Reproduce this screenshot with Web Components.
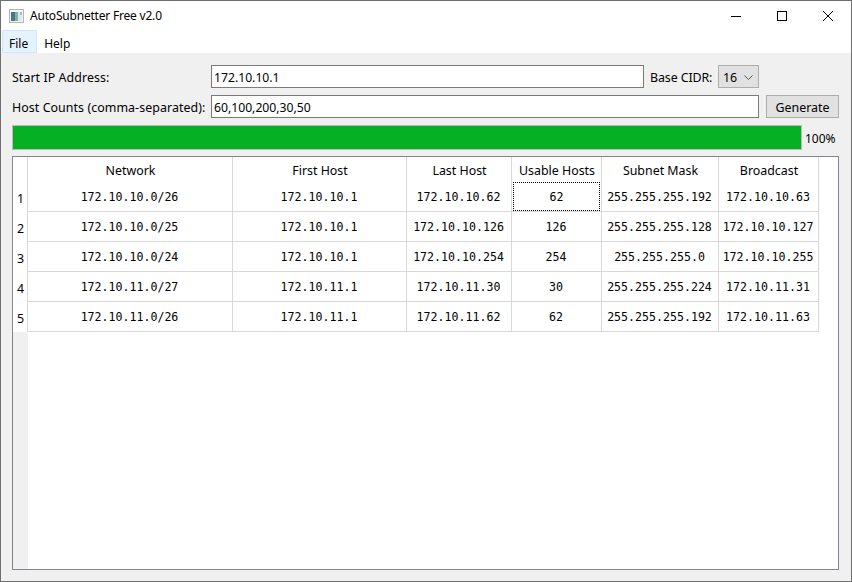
<!DOCTYPE html>
<html>
<head>
<meta charset="utf-8">
<title>AutoSubnetter Free v2.0</title>
<style>
  html, body { margin: 0; padding: 0; background: #f0f0f0; }
  body { font-family: "Noto Sans", "Open Sans", sans-serif; font-size: 12.4px; color: #000; }
</style>
</head>
<body>
<app-window>
  <title-bar slot="top" text="AutoSubnetter Free v2.0"></title-bar>
  <menu-bar slot="top"></menu-bar>
  <form-row short>
    <field-label wide>Start IP Address:</field-label>
    <text-field grow value="172.10.10.1"></text-field>
    <field-label narrow>Base CIDR:</field-label>
    <combo-box value="16"></combo-box>
  </form-row>
  <form-row>
    <field-label wide>Host Counts (comma-separated):</field-label>
    <text-field grow value="60,100,200,30,50"></text-field>
    <push-button>Generate</push-button>
  </form-row>
  <progress-bar value="100"></progress-bar>
  <data-table></data-table>
</app-window>

<script>
// app-window.js
class AppWindow extends HTMLElement {
  constructor() {
    super();
    this.root = this.attachShadow({mode: 'open'});
    this.root.innerHTML = `
    <style>
    :host {
      background: #f0f0f0;
      border: 1px solid #707070;
      box-sizing: border-box;
      display: flex;
      flex-direction: column;
      height: 582px;
      width: 852px;
    }
    .top { background: white; }
    .body {
      display: flex;
      flex: 1;
      flex-direction: column;
      min-height: 0;
      padding: 12px 12px 11px 11px;
    }
    </style>
    <div class="top"><slot name="top"></slot></div>
    <div class="body"><slot></slot></div>`;
  }
}

class TitleBar extends HTMLElement {
  constructor() {
    super();
    this.root = this.attachShadow({mode: 'open'});
    this.root.innerHTML = `
    <style>
    :host {
      align-items: center;
      display: flex;
      height: 29px;
    }
    .icon { margin: 0 6px 0 8px; }
    .text { flex: 1; font-size: 12px; letter-spacing: -0.2px; }
    .btn { display: block; height: 29px; width: 46px; }
    </style>
    <svg class="icon" width="15" height="14" viewBox="0 0 15 14">
      <rect x="0.5" y="0.5" width="14" height="13" fill="#f4f4f4" stroke="#b4b4b4"/>
      <rect x="2" y="3" width="4" height="9" fill="#4f7386"/>
      <rect x="6" y="3" width="3" height="9" fill="#7fb39a"/>
      <rect x="9" y="3" width="4" height="9" fill="#dfe8e8"/>
      <rect x="11" y="3" width="2" height="3" fill="#a9bcc4"/>
    </svg>
    <span class="text"></span>
    <svg class="btn" viewBox="0 0 46 29"><path d="M18 15.5h10" stroke="#000" fill="none"/></svg>
    <svg class="btn" viewBox="0 0 46 29"><rect x="18.5" y="10.5" width="9" height="9" stroke="#000" fill="none"/></svg>
    <svg class="btn" viewBox="0 0 46 29"><path d="M18 10l10 10M28 10l-10 10" stroke="#000" fill="none"/></svg>`;
    this.root.querySelector('.text').textContent = this.getAttribute('text');
  }
}

class MenuBar extends HTMLElement {
  constructor() {
    super();
    this.root = this.attachShadow({mode: 'open'});
    this.root.innerHTML = `
    <style>
    :host {
      display: flex;
      font-size: 12px;
      height: 23px;
      padding-left: 1px;
    }
    .item {
      align-items: center;
      border: 1px solid transparent;
      box-sizing: border-box;
      display: flex;
      padding: 3px 8px 0 6px;
    }
    .item.active {
      background: #e5f3ff;
      border-color: #cce8ff;
    }
    </style>
    <div class="item active">File</div>
    <div class="item">Help</div>`;
  }
}

class FormRow extends HTMLElement {
  constructor() {
    super();
    this.root = this.attachShadow({mode: 'open'});
    this.root.innerHTML = `
    <style>
    :host {
      display: flex;
      gap: 6px;
      height: 23px;
      margin-bottom: 7px;
    }
    :host([short]) { margin-right: 80px; }
    </style>
    <slot></slot>`;
  }
}

class FieldLabel extends HTMLElement {
  constructor() {
    super();
    this.root = this.attachShadow({mode: 'open'});
    this.root.innerHTML = `
    <style>
    :host {
      align-items: center;
      display: flex;
      padding-top: 1px;
      white-space: nowrap;
    }
    :host([wide]) { letter-spacing: 0.07px; width: 193px; }
    :host([narrow]) { letter-spacing: -0.1px; width: 62px; }
    </style>
    <slot></slot>`;
  }
}

class TextField extends HTMLElement {
  constructor() {
    super();
    this.root = this.attachShadow({mode: 'open'});
    this.root.innerHTML = `
    <style>
    :host {
      align-items: center;
      background: white;
      border: 1px solid #7a7a7a;
      box-sizing: border-box;
      display: flex;
      font-size: 12.2px;
      padding: 1px 0 0 2px;
    }
    :host([grow]) { flex: 1; }
    </style>
    <span></span>`;
    this.root.querySelector('span').textContent = this.getAttribute('value');
  }
}

class ComboBox extends HTMLElement {
  constructor() {
    super();
    this.root = this.attachShadow({mode: 'open'});
    this.root.innerHTML = `
    <style>
    :host {
      align-items: center;
      background: #e1e1e1;
      border: 1px solid #adadad;
      box-sizing: border-box;
      display: flex;
      justify-content: space-between;
      padding: 1px 5px 0 4px;
      width: 41px;
    }
    svg { display: block; }
    </style>
    <span></span>
    <svg width="9" height="5" viewBox="0 0 9 5"><path d="M0.5 0.5l4 4 4-4" stroke="#555" fill="none"/></svg>`;
    this.root.querySelector('span').textContent = this.getAttribute('value');
  }
}

class PushButton extends HTMLElement {
  constructor() {
    super();
    this.root = this.attachShadow({mode: 'open'});
    this.root.innerHTML = `
    <style>
    :host {
      align-items: center;
      background: #e1e1e1;
      border: 1px solid #adadad;
      box-sizing: border-box;
      display: flex;
      justify-content: center;
      margin-left: 1px;
      padding-top: 1px;
      width: 73px;
    }
    </style>
    <slot></slot>`;
  }
}

class ProgressBar extends HTMLElement {
  constructor() {
    super();
    this.root = this.attachShadow({mode: 'open'});
    this.root.innerHTML = `
    <style>
    :host {
      align-items: center;
      display: flex;
      font-size: 12px;
      gap: 3px;
      height: 25px;
      margin-bottom: 6px;
    }
    .track {
      background: #06b025;
      border: 1px solid #bcbcbc;
      box-sizing: border-box;
      height: 25px;
      width: 790px;
    }
    span { padding-top: 1px; }
    </style>
    <div class="track"></div>
    <span></span>`;
    this.root.querySelector('span').textContent = this.getAttribute('value') + '%';
  }
}

const COLUMNS = ['Network', 'First Host', 'Last Host', 'Usable Hosts', 'Subnet Mask', 'Broadcast'];
const ROWS = [
  ['172.10.10.0/26', '172.10.10.1', '172.10.10.62', '62', '255.255.255.192', '172.10.10.63'],
  ['172.10.10.0/25', '172.10.10.1', '172.10.10.126', '126', '255.255.255.128', '172.10.10.127'],
  ['172.10.10.0/24', '172.10.10.1', '172.10.10.254', '254', '255.255.255.0', '172.10.10.255'],
  ['172.10.11.0/27', '172.10.11.1', '172.10.11.30', '30', '255.255.255.224', '172.10.11.31'],
  ['172.10.11.0/26', '172.10.11.1', '172.10.11.62', '62', '255.255.255.192', '172.10.11.63'],
];

class DataTable extends HTMLElement {
  constructor() {
    super();
    this.root = this.attachShadow({mode: 'open'});
    this.root.innerHTML = `
    <style>
    :host {
      background: white;
      border: 1px solid #828790;
      box-sizing: border-box;
      display: flex;
      flex: 1;
      min-height: 0;
    }
    .side {
      background: #f0f0f0;
      width: 15px;
    }
    .corner { background: white; height: 25px; }
    .num {
      align-items: center;
      background: white;
      box-sizing: border-box;
      display: flex;
      height: 30px;
      justify-content: center;
      padding-top: 2px;
    }
    .grid {
      align-self: start;
      display: grid;
      grid-auto-rows: 30px;
      grid-template-columns: 205px 174px 105px 90px 117px 100px;
      grid-template-rows: 25px;
    }
    .head, .cell {
      align-items: center;
      box-sizing: border-box;
      display: flex;
      justify-content: center;
    }
    .head {
      border-right: 1px solid #d8d8d8;
      padding: 2px 0 0 1px;
    }
    .cell {
      border-bottom: 1px solid #d8d8d8;
      border-right: 1px solid #d8d8d8;
      font-family: "DejaVu Sans Mono", "Liberation Mono", monospace;
      font-size: 11.6px;
      padding-right: 1px;
    }
    .cell:nth-child(6n+1), .head:first-child { box-shadow: -1px 0 0 #d8d8d8; }
    .cell.current { padding: 0 1px; }
    .cell.current span {
      align-items: center;
      border: 1px dotted #000;
      box-sizing: border-box;
      display: flex;
      height: 100%;
      justify-content: center;
      width: 100%;
    }
    </style>
    <div class="side"><div class="corner"></div></div>
    <div class="grid"></div>`;

    const side = this.root.querySelector('.side');
    const grid = this.root.querySelector('.grid');

    COLUMNS.forEach(name => {
      const head = grid.appendChild(document.createElement('div'));
      head.setAttribute('class', 'head');
      head.textContent = name;
    });

    ROWS.forEach((row, r) => {
      const num = side.appendChild(document.createElement('div'));
      num.setAttribute('class', 'num');
      num.textContent = r + 1;
      row.forEach((value, c) => {
        const cell = grid.appendChild(document.createElement('div'));
        cell.setAttribute('class', 'cell');
        const text = cell.appendChild(document.createElement('span'));
        text.textContent = value;
        if(r == 0 && c == 3) {
          cell.classList.add('current');
        }
      });
    });
  }
}

customElements.define('app-window', AppWindow);
customElements.define('title-bar', TitleBar);
customElements.define('menu-bar', MenuBar);
customElements.define('form-row', FormRow);
customElements.define('field-label', FieldLabel);
customElements.define('text-field', TextField);
customElements.define('combo-box', ComboBox);
customElements.define('push-button', PushButton);
customElements.define('progress-bar', ProgressBar);
customElements.define('data-table', DataTable);
</script>
</body>
</html>
